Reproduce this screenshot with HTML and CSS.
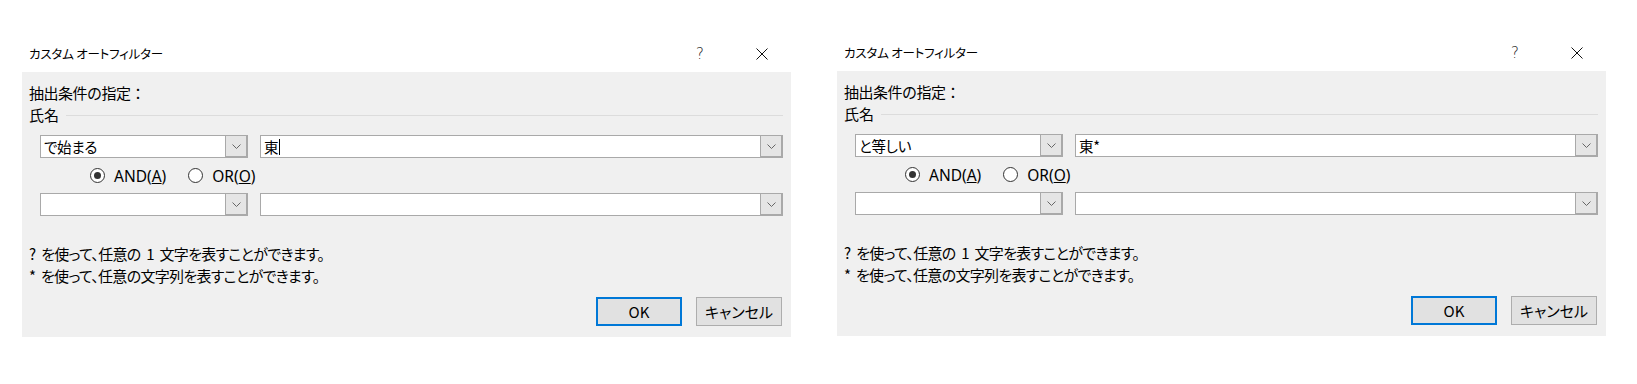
FILE: index.html
```html
<!DOCTYPE html>
<html>
<head>
    <title>カスタム オートフィルター</title>
    <link rel="stylesheet" href="styles.css">
</head>
<body>

<div class="screen">

    <div class="dialog">
        <div class="titlebar">
            <span class="caption">カスタム オートフィルター</span>
            <span class="help">?</span>
            <span class="close">
                <svg width="12" height="12" viewBox="0 0 12 12"><path d="M0.5 0.5 L11.5 11.5 M11.5 0.5 L0.5 11.5" stroke="#111" stroke-width="1" fill="none"/></svg>
            </span>
        </div>
        <div class="panel">
            <div class="label">抽出条件の指定：</div>
            <div class="group">
                <span>氏名</span>
                <span class="rule"></span>
            </div>
            <div class="row">
                <div class="combo op">
                    <span class="value">で始まる</span>
                    <span class="drop"><svg width="9" height="5" viewBox="0 0 9 5"><path d="M0.5 0.5 L4.5 4.5 L8.5 0.5" stroke="#666" stroke-width="1" fill="none"/></svg></span>
                </div>
                <div class="combo val">
                    <span class="value">東<span class="caret"></span></span>
                    <span class="drop"><svg width="9" height="5" viewBox="0 0 9 5"><path d="M0.5 0.5 L4.5 4.5 L8.5 0.5" stroke="#666" stroke-width="1" fill="none"/></svg></span>
                </div>
            </div>
            <div class="radios">
                <span class="radio checked"></span>
                <span class="rlabel">AND(<u>A</u>)</span>
                <span class="radio"></span>
                <span class="rlabel">OR(<u>O</u>)</span>
            </div>
            <div class="row">
                <div class="combo op">
                    <span class="value"></span>
                    <span class="drop"><svg width="9" height="5" viewBox="0 0 9 5"><path d="M0.5 0.5 L4.5 4.5 L8.5 0.5" stroke="#666" stroke-width="1" fill="none"/></svg></span>
                </div>
                <div class="combo val">
                    <span class="value"></span>
                    <span class="drop"><svg width="9" height="5" viewBox="0 0 9 5"><path d="M0.5 0.5 L4.5 4.5 L8.5 0.5" stroke="#666" stroke-width="1" fill="none"/></svg></span>
                </div>
            </div>
            <div class="hints">
                <div>? を使って、任意の 1 文字を表すことができます。</div>
                <div>* を使って、任意の文字列を表すことができます。</div>
            </div>
            <div class="buttons">
                <button class="btn default">OK</button>
                <button class="btn">キャンセル</button>
            </div>
        </div>
    </div>

    <div class="dialog second">
        <div class="titlebar">
            <span class="caption">カスタム オートフィルター</span>
            <span class="help">?</span>
            <span class="close">
                <svg width="12" height="12" viewBox="0 0 12 12"><path d="M0.5 0.5 L11.5 11.5 M11.5 0.5 L0.5 11.5" stroke="#111" stroke-width="1" fill="none"/></svg>
            </span>
        </div>
        <div class="panel">
            <div class="label">抽出条件の指定：</div>
            <div class="group">
                <span>氏名</span>
                <span class="rule"></span>
            </div>
            <div class="row">
                <div class="combo op">
                    <span class="value">と等しい</span>
                    <span class="drop"><svg width="9" height="5" viewBox="0 0 9 5"><path d="M0.5 0.5 L4.5 4.5 L8.5 0.5" stroke="#666" stroke-width="1" fill="none"/></svg></span>
                </div>
                <div class="combo val">
                    <span class="value">東*</span>
                    <span class="drop"><svg width="9" height="5" viewBox="0 0 9 5"><path d="M0.5 0.5 L4.5 4.5 L8.5 0.5" stroke="#666" stroke-width="1" fill="none"/></svg></span>
                </div>
            </div>
            <div class="radios">
                <span class="radio checked"></span>
                <span class="rlabel">AND(<u>A</u>)</span>
                <span class="radio"></span>
                <span class="rlabel">OR(<u>O</u>)</span>
            </div>
            <div class="row">
                <div class="combo op">
                    <span class="value"></span>
                    <span class="drop"><svg width="9" height="5" viewBox="0 0 9 5"><path d="M0.5 0.5 L4.5 4.5 L8.5 0.5" stroke="#666" stroke-width="1" fill="none"/></svg></span>
                </div>
                <div class="combo val">
                    <span class="value"></span>
                    <span class="drop"><svg width="9" height="5" viewBox="0 0 9 5"><path d="M0.5 0.5 L4.5 4.5 L8.5 0.5" stroke="#666" stroke-width="1" fill="none"/></svg></span>
                </div>
            </div>
            <div class="hints">
                <div>? を使って、任意の 1 文字を表すことができます。</div>
                <div>* を使って、任意の文字列を表すことができます。</div>
            </div>
            <div class="buttons">
                <button class="btn default">OK</button>
                <button class="btn">キャンセル</button>
            </div>
        </div>
    </div>

</div>

</body>
</html>
```

FILE: styles.css
```css
body {
    margin: 0;
    background-color: #fff;
    color: #000;
    font-family: 'Noto Sans CJK JP', 'Noto Sans', sans-serif;
    font-feature-settings: "palt";
}

.screen {
    display: flex;
    align-items: flex-start;
    gap: 46px;
    padding: 35px 0 0 22px;
}

.dialog {
    width: 769px;
}

.dialog.second {
    margin-top: -1px;
}

.titlebar {
    height: 37px;
    display: flex;
    align-items: center;
    padding-left: 7px;
    font-size: 12.5px;
    letter-spacing: -0.2px;
}

.caption {
    flex-grow: 1;
}

.help {
    width: 14px;
    font-size: 15px;
    font-family: 'DejaVu Sans', sans-serif;
    font-weight: 200;
    color: #222;
    margin-right: 46px;
}

.close {
    display: flex;
    margin-right: 23px;
}

.panel {
    height: 265px;
    box-sizing: border-box;
    background-color: #f0f0f0;
    padding: 10px 8px 0 7px;
    font-size: 15px;
    line-height: 22px;
}

.label {
    font-feature-settings: normal;
    letter-spacing: -0.5px;
}

.group {
    display: flex;
    align-items: center;
}

.rule {
    flex-grow: 1;
    height: 1px;
    background-color: #dcdcdc;
    margin-left: 7px;
}

.row {
    display: flex;
    gap: 12px;
    margin-left: 11px;
}

.group + .row {
    margin-top: 9px;
}

.combo {
    height: 23px;
    box-sizing: border-box;
    border: 1px solid #a9a9a9;
    background-color: #fff;
    display: flex;
}

.combo.op {
    width: 208px;
}

.combo.val {
    width: 523px;
}

.value {
    flex-grow: 1;
    padding-left: 3px;
    font-size: 14.5px;
    line-height: 21px;
    letter-spacing: -0.3px;
    display: flex;
    align-items: center;
}

.caret {
    width: 1px;
    height: 16px;
    background-color: #000;
    margin-left: 1px;
}

.drop {
    width: 21px;
    background-color: #e5e5e5;
    border-left: 1px solid #a9a9a9;
    box-shadow: inset -1px -1px 0 #a9a9a9;
    display: flex;
    align-items: center;
    justify-content: center;
}

.radios {
    height: 35px;
    display: flex;
    align-items: center;
    padding-left: 61px;
    font-family: 'Noto Sans', sans-serif;
    font-size: 15.5px;
}

.radio {
    width: 13px;
    height: 13px;
    border: 1px solid #333;
    border-radius: 50%;
    background-color: #fff;
    display: flex;
    align-items: center;
    justify-content: center;
    margin-right: 9px;
}

.radio.checked::after {
    content: "";
    width: 7px;
    height: 7px;
    border-radius: 50%;
    background-color: #333;
}

.rlabel {
    margin-right: 22px;
}

.hints {
    margin-top: 27px;
    letter-spacing: -0.7px;
    word-spacing: 3px;
}

.buttons {
    display: flex;
    justify-content: flex-end;
    gap: 14px;
    margin-top: 10px;
    padding-right: 1px;
}

.btn {
    width: 86px;
    height: 29px;
    box-sizing: border-box;
    background-color: #e1e1e1;
    border: 1px solid #adadad;
    font-family: 'Noto Sans CJK JP', 'Noto Sans', sans-serif;
    font-feature-settings: "palt";
    font-size: 15px;
    color: #000;
    padding: 0;
}

.btn.default {
    border: 2px solid #0078d7;
}
```
